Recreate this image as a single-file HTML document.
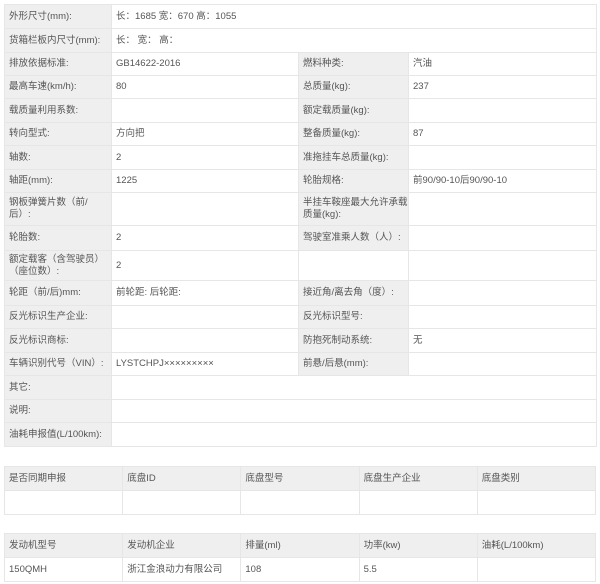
<!DOCTYPE html>
<html><head><meta charset="utf-8"><style>
body{margin:0;background:#fff;width:600px;height:584px;overflow:hidden;font-family:"Liberation Sans","Noto Sans CJK SC",sans-serif;font-size:9.5px;color:#555;}
table{position:absolute;left:4px;width:592px;border-collapse:collapse;table-layout:fixed;}
td{border:1px solid #e6e6e6;padding:0 4px;vertical-align:middle;line-height:12px;white-space:nowrap;}
td.l{background:#efefef;}
.h td{background:#efefef;}
</style></head><body>
<table style="top:4px">
<colgroup><col style="width:107px"><col style="width:187px"><col style="width:110px"><col style="width:188px"></colgroup>
<tr style="height:24px"><td class="l">外形尺寸(mm):</td><td colspan="3">长：1685 宽：670 高：1055</td></tr>
<tr style="height:24px"><td class="l">货箱栏板内尺寸(mm):</td><td colspan="3">长： 宽： 高：</td></tr>
<tr style="height:23px"><td class="l">排放依据标准:</td><td>GB14622-2016</td><td class="l">燃料种类:</td><td>汽油</td></tr>
<tr style="height:23px"><td class="l">最高车速(km/h):</td><td>80</td><td class="l">总质量(kg):</td><td>237</td></tr>
<tr style="height:24px"><td class="l">载质量利用系数:</td><td></td><td class="l">额定载质量(kg):</td><td></td></tr>
<tr style="height:23px"><td class="l">转向型式:</td><td>方向把</td><td class="l">整备质量(kg):</td><td>87</td></tr>
<tr style="height:24px"><td class="l">轴数:</td><td>2</td><td class="l">准拖挂车总质量(kg):</td><td></td></tr>
<tr style="height:23px"><td class="l">轴距(mm):</td><td>1225</td><td class="l">轮胎规格:</td><td>前90/90-10后90/90-10</td></tr>
<tr style="height:33px"><td class="l">钢板弹簧片数（前/<br>后）:</td><td></td><td class="l">半挂车鞍座最大允许承载<br>质量(kg):</td><td></td></tr>
<tr style="height:25px"><td class="l">轮胎数:</td><td>2</td><td class="l">驾驶室准乘人数（人）:</td><td></td></tr>
<tr style="height:30px"><td class="l">额定载客（含驾驶员）<br>（座位数）:</td><td>2</td><td></td><td></td></tr>
<tr style="height:25px"><td class="l">轮距（前/后)mm:</td><td>前轮距: 后轮距:</td><td class="l">接近角/离去角（度）:</td><td></td></tr>
<tr style="height:23px"><td class="l">反光标识生产企业:</td><td></td><td class="l">反光标识型号:</td><td></td></tr>
<tr style="height:24px"><td class="l">反光标识商标:</td><td></td><td class="l">防抱死制动系统:</td><td>无</td></tr>
<tr style="height:23px"><td class="l">车辆识别代号（VIN）:</td><td>LYSTCHPJ×××××××××</td><td class="l">前悬/后悬(mm):</td><td></td></tr>
<tr style="height:24px"><td class="l">其它:</td><td colspan="3"></td></tr>
<tr style="height:23px"><td class="l">说明:</td><td colspan="3"></td></tr>
<tr style="height:24px"><td class="l">油耗申报值(L/100km):</td><td colspan="3"></td></tr>
</table>
<table style="top:466px">
<tr class="h" style="height:24px"><td>是否同期申报</td><td>底盘ID</td><td>底盘型号</td><td>底盘生产企业</td><td>底盘类别</td></tr>
<tr style="height:24px"><td></td><td></td><td></td><td></td><td></td></tr>
</table>
<table style="top:533px">
<tr class="h" style="height:24px"><td>发动机型号</td><td>发动机企业</td><td>排量(ml)</td><td>功率(kw)</td><td>油耗(L/100km)</td></tr>
<tr style="height:24px"><td>150QMH</td><td>浙江金浪动力有限公司</td><td>108</td><td>5.5</td><td></td></tr>
</table>
</body></html>
